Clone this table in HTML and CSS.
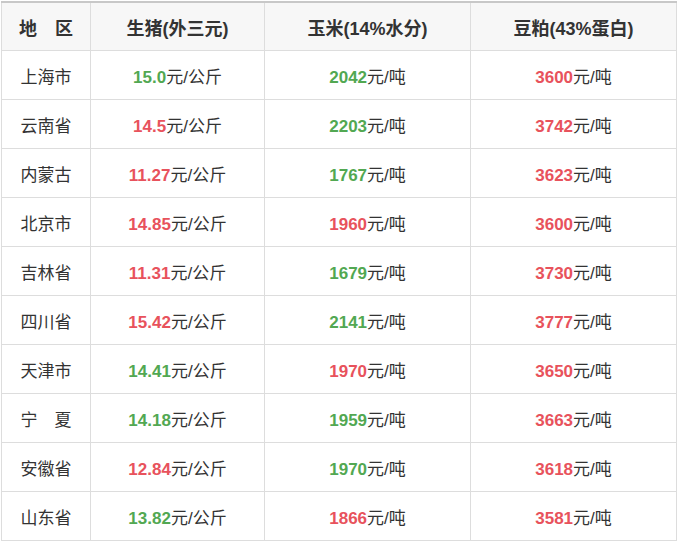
FILE: index.html
```html
<!DOCTYPE html>
<html lang="zh">
<head>
<meta charset="utf-8">
<link rel="stylesheet" href="styles.css">
</head>
<body>
<div class="wrap">
<table class="price">
  <thead>
    <tr><th class="c1">地<span class="gap"></span>区</th><th class="c2">生猪(外三元)</th><th class="c3">玉米(14%水分)</th><th class="c4">豆粕(43%蛋白)</th></tr>
  </thead>
  <tbody>
    <tr><td>上海市</td><td><b class="g">15.0</b>元/公斤</td><td><b class="g">2042</b>元/吨</td><td><b class="r">3600</b>元/吨</td></tr>
    <tr><td>云南省</td><td><b class="r">14.5</b>元/公斤</td><td><b class="g">2203</b>元/吨</td><td><b class="r">3742</b>元/吨</td></tr>
    <tr><td>内蒙古</td><td><b class="r">11.27</b>元/公斤</td><td><b class="g">1767</b>元/吨</td><td><b class="r">3623</b>元/吨</td></tr>
    <tr><td>北京市</td><td><b class="r">14.85</b>元/公斤</td><td><b class="r">1960</b>元/吨</td><td><b class="r">3600</b>元/吨</td></tr>
    <tr><td>吉林省</td><td><b class="r">11.31</b>元/公斤</td><td><b class="g">1679</b>元/吨</td><td><b class="r">3730</b>元/吨</td></tr>
    <tr><td>四川省</td><td><b class="r">15.42</b>元/公斤</td><td><b class="g">2141</b>元/吨</td><td><b class="r">3777</b>元/吨</td></tr>
    <tr><td>天津市</td><td><b class="g">14.41</b>元/公斤</td><td><b class="r">1970</b>元/吨</td><td><b class="r">3650</b>元/吨</td></tr>
    <tr><td>宁<span class="gap"></span>夏</td><td><b class="g">14.18</b>元/公斤</td><td><b class="g">1959</b>元/吨</td><td><b class="r">3663</b>元/吨</td></tr>
    <tr><td>安徽省</td><td><b class="r">12.84</b>元/公斤</td><td><b class="g">1970</b>元/吨</td><td><b class="r">3618</b>元/吨</td></tr>
    <tr><td>山东省</td><td><b class="g">13.82</b>元/公斤</td><td><b class="r">1866</b>元/吨</td><td><b class="r">3581</b>元/吨</td></tr>
  </tbody>
</table>
</div>
</body>
</html>
```
FILE: styles.css
```css
html, body {
  margin: 0;
  padding: 0;
  background: #fff;
}
.wrap {
  padding: 1px 0 0 1px;
  width: 677px;
}
.price {
  width: 676px;
  border-collapse: collapse;
  table-layout: fixed;
  font-family: "Liberation Sans", "Noto Sans CJK SC", sans-serif;
  font-size: 17px;
  color: #333;
  border-top: 2px solid #c8c8c8;
}
.price th, .price td {
  border: 1px solid #dddddd;
  text-align: center;
  vertical-align: middle;
  padding: 0;
}
.price th {
  height: 47px;
  background: #f7f7f7;
  font-weight: bold;
  font-size: 18px;
  border-top: 0;
}
.price td {
  height: 48px;
}
.c1 { width: 88px; }
.c2 { width: 173px; }
.c3 { width: 205px; }
.c4 { width: auto; }
.gap {
  display: inline-block;
  width: 18px;
}
.price td .gap { width: 17px; }
b { font-weight: bold; }
.g { color: #52a852; }
.r { color: #e8525c; }
```
